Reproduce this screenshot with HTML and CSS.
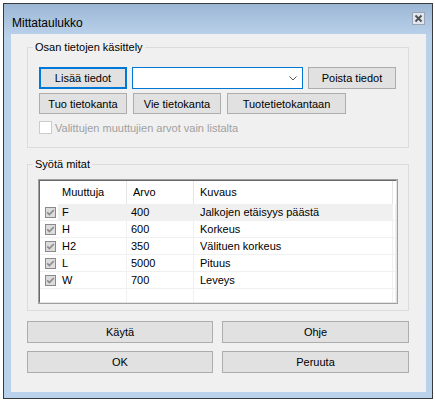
FILE: index.html
```html
<!DOCTYPE html>
<html lang="fi">
<head>
    <meta charset="UTF-8">
    <meta name="viewport" content="width=device-width, initial-scale=1.0">
    <title>Mittataulukko</title>
    <link rel="stylesheet" href="styles.css">
</head>
<body>
    <div class="window">
        <div class="titlebar">
            <span class="title">Mittataulukko</span>
            <span class="close-btn">
                <svg width="11" height="11" viewBox="0 0 11 11">
                    <path d="M2.5 2.5 L8.5 8.5 M8.5 2.5 L2.5 8.5" stroke="#4d4d4d" stroke-width="1.8" fill="none"/>
                </svg>
            </span>
        </div>

        <div class="client">
            <!-- osan tiedot -->
            <fieldset class="group group-data">
                <legend>Osan tietojen käsittely</legend>
                <div class="btn-row row-top">
                    <button class="btn btn-focus btn-add">Lisää tiedot</button>
                    <div class="combo">
                        <svg class="combo-arrow" width="8" height="5" viewBox="0 0 8 5">
                            <polyline points="0.5,0.5 4,4 7.5,0.5" stroke="#555" stroke-width="1" fill="none"/>
                        </svg>
                    </div>
                    <button class="btn btn-remove">Poista tiedot</button>
                </div>
                <div class="btn-row row-db">
                    <button class="btn btn-import">Tuo tietokanta</button>
                    <button class="btn btn-export">Vie tietokanta</button>
                    <button class="btn btn-product">Tuotetietokantaan</button>
                </div>
                <label class="check-row disabled">
                    <span class="checkbox"></span>
                    Valittujen muuttujien arvot vain listalta
                </label>
            </fieldset>

            <!-- mitat -->
            <fieldset class="group group-measures">
                <legend>Syötä mitat</legend>
                <div class="listview">
                    <div class="list-inner">
                        <div class="list-row list-head">
                            <div class="cell col-name">Muuttuja</div>
                            <div class="cell col-value">Arvo</div>
                            <div class="cell col-desc">Kuvaus</div>
                            <div class="cell col-fill"></div>
                        </div>
                        <div id="list-body"></div>
                        <div class="list-row list-empty">
                            <div class="cell col-name"></div>
                            <div class="cell col-value"></div>
                            <div class="cell col-desc"></div>
                            <div class="cell col-fill"></div>
                        </div>
                    </div>
                </div>
            </fieldset>

            <div class="dialog-buttons">
                <button class="btn">Käytä</button>
                <button class="btn">Ohje</button>
                <button class="btn">OK</button>
                <button class="btn">Peruuta</button>
            </div>
        </div>
    </div>

    <script>
        // mittojen tiedot
        const measures = [
            { name: 'F', value: '400', desc: 'Jalkojen etäisyys päästä' },
            { name: 'H', value: '600', desc: 'Korkeus' },
            { name: 'H2', value: '350', desc: 'Välituen korkeus' },
            { name: 'L', value: '5000', desc: 'Pituus' },
            { name: 'W', value: '700', desc: 'Leveys' }
        ];

        const checkSvg = `
            <svg class="list-check" width="11" height="11" viewBox="0 0 11 11">
                <rect x="0.5" y="0.5" width="10" height="10" fill="#dcdcdc" stroke="#8a8a8a"/>
                <polyline points="2.2,5.4 4.4,7.6 8.8,3.0" stroke="#8c8c8c" stroke-width="1.7" fill="none"/>
            </svg>`;

        const body = document.getElementById('list-body');
        measures.forEach((m, i) => {
            const row = document.createElement('div');
            row.className = 'list-row list-item' + (i === 0 ? ' selected' : '');
            row.innerHTML = `
                <div class="cell col-name">${checkSvg}<span class="item-text">${m.name}</span></div>
                <div class="cell col-value">${m.value}</div>
                <div class="cell col-desc">${m.desc}</div>
                <div class="cell col-fill"></div>
            `;
            body.appendChild(row);
        });
    </script>
</body>
</html>
```

FILE: styles.css
```css
* {
    margin: 0;
    padding: 0;
    box-sizing: border-box;
}

body {
    background-color: #fff;
    color: #000;
    font-family: "Liberation Sans", Arial, sans-serif;
    font-size: 11px;
}

.window {
    width: 430px;
    height: 396px;
    margin: 3px;
    border: 1px solid #3a3a3a;
    background: linear-gradient(to bottom, #9cb7d5 0, #bad1ea 32px, #b9d1ea 100%);
    padding: 0 6px 6px 7px;
    display: flex;
    flex-direction: column;
}

.titlebar {
    height: 30px;
    display: flex;
    justify-content: space-between;
    align-items: flex-start;
}

.title {
    font-size: 12px;
    line-height: 14px;
    padding-top: 12px;
    margin-left: 1px;
    color: #000;
}

.close-btn {
    width: 13px;
    height: 13px;
    margin-top: 8px;
    margin-right: 1px;
    border: 1px solid #9aa6b4;
    background-color: #dfe6ef;
    display: flex;
    align-items: center;
    justify-content: center;
}

.client {
    flex: 1;
    background-color: #f0f0f0;
    padding: 7px 17px 0 16px;
}

.group {
    border: 1px solid #dcdcdc;
}

.group legend {
    font-size: 11px;
    line-height: 13px;
    padding: 0 2px;
}

.group-data {
    padding: 13px 12px 12px 11px;
}

.group-data legend {
    margin-left: -6px;
}

.group-measures {
    margin-top: 10px;
    padding: 8px 10px 6px 10px;
}

.group-measures legend {
    margin-left: -5px;
}

.btn {
    background-color: #e1e1e1;
    border: 1px solid #adadad;
    font-family: inherit;
    font-size: 11px;
    color: #000;
    text-align: center;
    padding: 0;
}

.btn-focus {
    border: 2px solid #0078d7;
}

.btn-row {
    display: flex;
}

.row-top {
    height: 22px;
    gap: 5px;
}

.row-db {
    height: 21px;
    gap: 6px;
    margin-top: 4px;
}

.btn-add,
.btn-remove,
.btn-import,
.btn-export {
    width: 88px;
}

.btn-product {
    width: 119px;
}

.combo {
    width: 171px;
    background-color: #fff;
    border: 1px solid #0078d7;
    display: flex;
    align-items: center;
    justify-content: flex-end;
    padding-right: 5px;
}

.check-row {
    display: flex;
    align-items: center;
    height: 15px;
    margin-top: 6px;
}

.check-row .checkbox {
    width: 13px;
    height: 13px;
    background-color: #fff;
    border: 1px solid #cccccc;
    margin-right: 3px;
}

.check-row.disabled {
    color: #a0a0a0;
}

.listview {
    height: 125px;
    border: 1px solid #a0a0a0;
    background-color: #fff;
}

.list-inner {
    height: 100%;
    border: 1px solid;
    border-color: #696969 #e3e3e3 #e3e3e3 #696969;
    display: flex;
    flex-direction: column;
}

.list-row {
    display: grid;
    grid-template-columns: 87px 67px 199px 1fr;
}

.list-head {
    height: 23px;
    line-height: 23px;
}

.list-head .cell {
    border-right: 1px solid #e5e5e5;
}

.list-head .col-name {
    padding-left: 22px;
}

.list-head .col-value,
.list-head .col-desc {
    padding-left: 6px;
}

.list-head .col-fill,
.list-item .col-fill,
.list-empty .col-fill {
    border-right: none;
}

.list-item {
    height: 17px;
    line-height: 16px;
    border-bottom: 1px solid #f0f0f0;
}

.list-item .cell,
.list-empty .cell {
    border-right: 1px solid #f0f0f0;
}

.list-item .col-name {
    display: flex;
    align-items: center;
}

.list-check {
    margin-left: 5px;
    margin-right: 2px;
    flex: none;
}

.item-text {
    flex: 1;
    padding-left: 4px;
    align-self: stretch;
}

.list-item .col-value {
    padding-left: 4px;
}

.list-item .col-desc {
    padding-left: 6px;
}

.list-item.selected .item-text,
.list-item.selected .col-value,
.list-item.selected .col-desc {
    background-color: #f0f0f0;
}

.list-empty {
    flex: 1;
}

.dialog-buttons {
    display: grid;
    grid-template-columns: 186px 187px;
    grid-auto-rows: 22px;
    column-gap: 9px;
    row-gap: 8px;
    margin-top: 10px;
}
```
